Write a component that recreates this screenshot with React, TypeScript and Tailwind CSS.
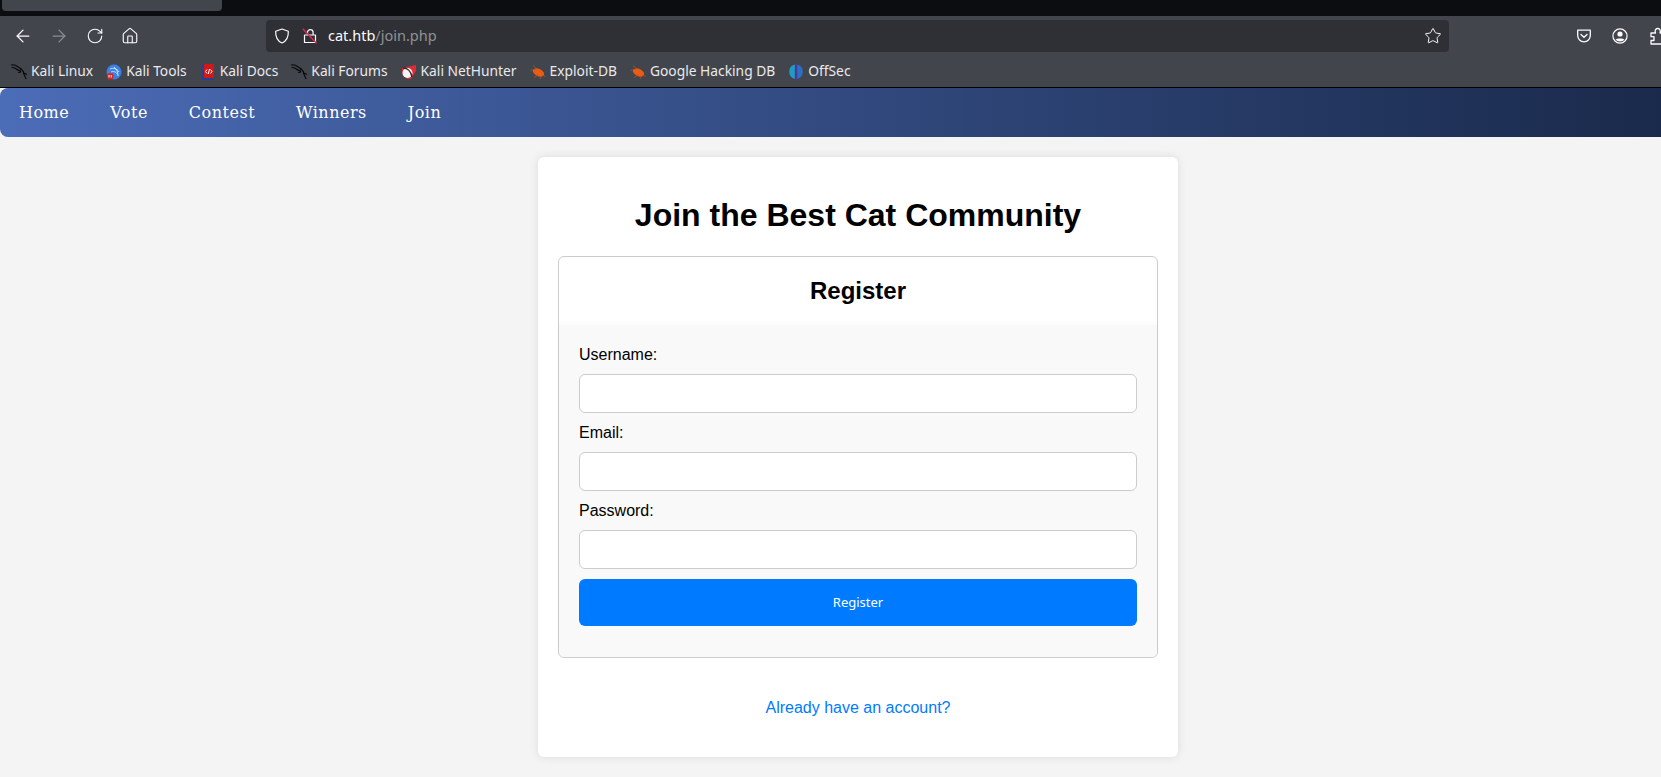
import React from 'react';
import { ArrowLeft, ArrowRight, RotateCw, Home, Star } from 'lucide-react';

const KaliIcon = () => (
  <svg width="16" height="16" viewBox="0 0 16 16" fill="none" stroke="#0a0a0a" strokeWidth="1.2" strokeLinecap="round">
    <path d="M0.500 1c2.500-.3 4.500.3 6 1.500 1.200 1 2.500 1.300 3.500 2.500" />
    <path d="M1 3.500c2 0 3.500.5 5 2 1 1 2.500 .6 3.500 1.500.8.700-.5 1.800-2 1.300" />
    <path d="M10 5c1.500 1 2.500 2.500 2.800 4.500.2 1.500 1 3 2.200 5" />
    <path d="M12.500 9.500c1-.4 2 .1 2.800.8" />
  </svg>
);

const ToolsIcon = () => (
  <svg width="16" height="16" viewBox="0 0 16 16">
    <circle cx="8" cy="8" r="7.500" fill="#3b82e6" />
    <path d="M4 5c3-1.500 7-.5 9 3M5 8c2-1 5-.5 6.500 2.500M8 3c2.500 2 4 5 4 9" stroke="#e8f1ff" strokeWidth="0.800" fill="none" />
    <rect x="1" y="9" width="6.500" height="6.500" rx="2.500" fill="#d62828" />
    <path d="M3 11v2.500M5.200 11v2.500" stroke="#fff" strokeWidth="0.900" />
  </svg>
);

const DocsIcon = () => (
  <svg width="16" height="16" viewBox="0 0 16 16">
    <rect x="2" y="0" width="12" height="16" fill="#d01818" />
    <rect x="2" y="14" width="12" height="2" fill="#24408e" />
    <rect x="2" y="0" width="2" height="16" fill="#24408e" />
    <path d="M7 5.500L5.500 7.500 7 9.500M10.500 5.500L12 7.500l-1.500 2M9.500 5l-1.200 5" stroke="#fff" strokeWidth="1" fill="none" />
  </svg>
);

const HunterIcon = () => (
  <svg width="16" height="16" viewBox="0 0 16 16">
    <path d="M1 4l14-3v6l-5 8H6L1 9z" fill="#e02a35" />
    <circle cx="6.500" cy="9" r="5" fill="#f5f5f5" />
    <path d="M2 4c4 0 8 3 9 9" stroke="#2b2b2b" strokeWidth="1.500" fill="none" />
  </svg>
);

const ExploitIcon = () => (
  <svg width="16" height="16" viewBox="0 0 16 16">
    <ellipse cx="8.500" cy="8.500" rx="6" ry="3.600" transform="rotate(25 8.500 8.500)" fill="#ea5b14" />
    <path d="M0.500 6.500l5-1.500M3 1.500l4 3.500M4 13.500l4-2.500M10 15l1.500-3M15.500 12.500l-3-1.500" stroke="#a9532c" strokeWidth="0.800" />
  </svg>
);

const OffSecIcon = () => (
  <svg width="16" height="16" viewBox="0 0 16 16">
    <path d="M6.800 0.500A7.500 7.500 0 0 0 6.800 15z" fill="#1f9bc9" />
    <path d="M9.200 0.500A7.500 7.500 0 0 1 9.200 15z" fill="#2b6fc7" />
    <rect x="7.400" y="0" width="1.200" height="16" fill="#5b2fc0" />
  </svg>
);

const PocketIcon = () => (
  <svg width="16" height="16" viewBox="0 0 16 16" fill="none" stroke="#fbfbfe" strokeWidth="1.300">
    <path d="M1.700 2.200h12.600v5.300a6.300 6.300 0 0 1-12.600 0z" strokeLinejoin="round" />
    <path d="M5 6.500l3 2.800 3-2.800" strokeLinecap="round" />
  </svg>
);

const ProfileIcon = () => (
  <svg width="16" height="16" viewBox="0 0 16 16">
    <circle cx="8" cy="8" r="7.100" fill="none" stroke="#fbfbfe" strokeWidth="1.200" />
    <circle cx="8" cy="6" r="2.600" fill="#fbfbfe" />
    <path d="M3.500 11.500c1-1.500 8-1.500 9 0-1 1.200-2.500 2-4.500 2s-3.500-.8-4.500-2z" fill="#fbfbfe" />
  </svg>
);

const ExtensionIcon = () => (
  <svg width="18" height="18" viewBox="0 0 18 18" fill="none" stroke="#fbfbfe" strokeWidth="1.300" strokeLinejoin="round">
    <path d="M1 6h4.500c-1-3 .5-4.500 2.200-4.500S11 3 10 6h5.500v3.500c3-1 3 5 0 4V17H1v-3.500h3v-3.800H1z" />
  </svg>
);

const ShieldIcon = () => (
  <svg width="16" height="16" viewBox="0 0 16 16" fill="none" stroke="#fbfbfe" strokeWidth="1.200" strokeLinejoin="round">
    <path d="M8 1l6.300 2.200c.3 5.500-1.700 9.700-6.300 11.800C3.400 12.900 1.400 8.700 1.700 3.200z" />
  </svg>
);

const LockIcon = () => (
  <svg width="16" height="16" viewBox="0 0 16 16" fill="none">
    <path d="M5.500 7V4.500a2.800 2.800 0 0 1 5.600 0V7M2.500 7h11v7.500h-11z" stroke="#fbfbfe" strokeWidth="1.200" strokeLinejoin="round" />
    <path d="M0.800 0.800l13.700 14.400" stroke="#e22850" strokeWidth="1.400" />
  </svg>
);

const bookmarks: { label: string; icon: React.ReactNode }[] = [
  { label: 'Kali Linux', icon: <KaliIcon /> },
  { label: 'Kali Tools', icon: <ToolsIcon /> },
  { label: 'Kali Docs', icon: <DocsIcon /> },
  { label: 'Kali Forums', icon: <KaliIcon /> },
  { label: 'Kali NetHunter', icon: <HunterIcon /> },
  { label: 'Exploit-DB', icon: <ExploitIcon /> },
  { label: 'Google Hacking DB', icon: <ExploitIcon /> },
  { label: 'OffSec', icon: <OffSecIcon /> },
];

const navLinks = ['Home', 'Vote', 'Contest', 'Winners', 'Join'];
const fields = ['Username:', 'Email:', 'Password:'];

const BrowserChrome = () => (
  <div className="w-[1661px] shrink-0 font-['Noto_Sans',sans-serif]">
    <div className="h-4 bg-[#0c0d11] pl-[2px]">
      <div className="h-[11px] w-[220px] rounded-b bg-[#43454d]" />
    </div>
    <div className="flex h-10 items-center bg-[#43454d]">
      <div className="flex w-[266px] shrink-0 items-center pl-[13px] text-[#fbfbfe]">
        <ArrowLeft size={20} strokeWidth={1.5} />
        <ArrowRight size={20} strokeWidth={1.5} className="ml-[16px] text-[#8c8d92]" />
        <RotateCw size={18} strokeWidth={1.5} className="ml-[17px]" />
        <Home size={18} strokeWidth={1.5} className="ml-[17px]" />
      </div>
      <div className="flex h-8 w-[1183px] shrink-0 items-center rounded bg-[#2f3036] pr-[7px] pl-[8px] text-[#fbfbfe]">
        <ShieldIcon />
        <span className="ml-[12px]"><LockIcon /></span>
        <span className="ml-[10px] text-[14.500px]">cat.htb<span className="text-[#8f9094]">/join.php</span></span>
        <Star size={18} strokeWidth={1.3} className="ml-auto" />
      </div>
      <div className="flex items-center pl-[127px]">
        <PocketIcon />
        <span className="ml-[20px]"><ProfileIcon /></span>
        <span className="ml-[22px]"><ExtensionIcon /></span>
      </div>
    </div>
    <div className="flex h-8 items-center gap-[13px] border-b border-black bg-[#43454d] pl-[11px] text-[13.800px] text-[#e9e9ec]">
      {bookmarks.map((b) => (
        <div key={b.label} className="flex items-center gap-[4px] whitespace-nowrap">
          {b.icon}
          <span>{b.label}</span>
        </div>
      ))}
    </div>
  </div>
);

export default function App() {
  return (
    <div className="flex h-[777px] flex-col overflow-hidden bg-[#f4f4f4] font-['Liberation_Sans',sans-serif] text-black">
      <BrowserChrome />
      {/* the page was wider than the captured window, its right edge is cut off */}
      <div className="w-[1716px] shrink-0">
        <nav className="flex h-[49px] items-center gap-[41px] rounded-lg bg-gradient-to-r from-[#4b6cb7] to-[#182848] pl-[19px] font-['DejaVu_Serif',serif] text-base tracking-[0.5px] text-white">
          {navLinks.map((l) => (
            <a key={l} href="#">{l}</a>
          ))}
        </nav>
        <main className="flex justify-center pt-5">
          <div className="w-[640px] rounded-md bg-white px-5 pb-5 shadow-[0_0_10px_rgba(0,0,0,0.1)]">
            <h1 className="pt-[40px] text-center text-[32px] leading-[37px] font-bold">Join the Best Cat Community</h1>
            <div className="mt-[22px] rounded-md border border-[#ccc] bg-white">
              <h2 className="h-[68px] pt-[20px] text-center text-2xl leading-[27px] font-bold">Register</h2>
              <form className="rounded-b-md bg-[#f9f9f9] px-5 pt-[21px] pb-[31px] shadow-[0_-2px_4px_rgba(0,0,0,0.02)]">
                {fields.map((f) => (
                  <div key={f}>
                    <label className="block h-[18px] text-base leading-[18px]">{f}</label>
                    <input className="mt-[10px] mb-[11px] block h-[39px] w-full rounded-md border border-[#ccc] bg-white" />
                  </div>
                ))}
                <button type="button" className="-mt-[1px] block h-[47px] w-full rounded-md bg-[#007bff] pt-[1px] font-['Noto_Sans',sans-serif] text-[13px] text-white">
                  Register
                </button>
              </form>
            </div>
            <p className="mt-[41px] mb-[20px] text-center text-base leading-[18px]">
              <a href="#" className="text-[#007bff]">Already have an account?</a>
            </p>
          </div>
        </main>
      </div>
    </div>
  );
}
